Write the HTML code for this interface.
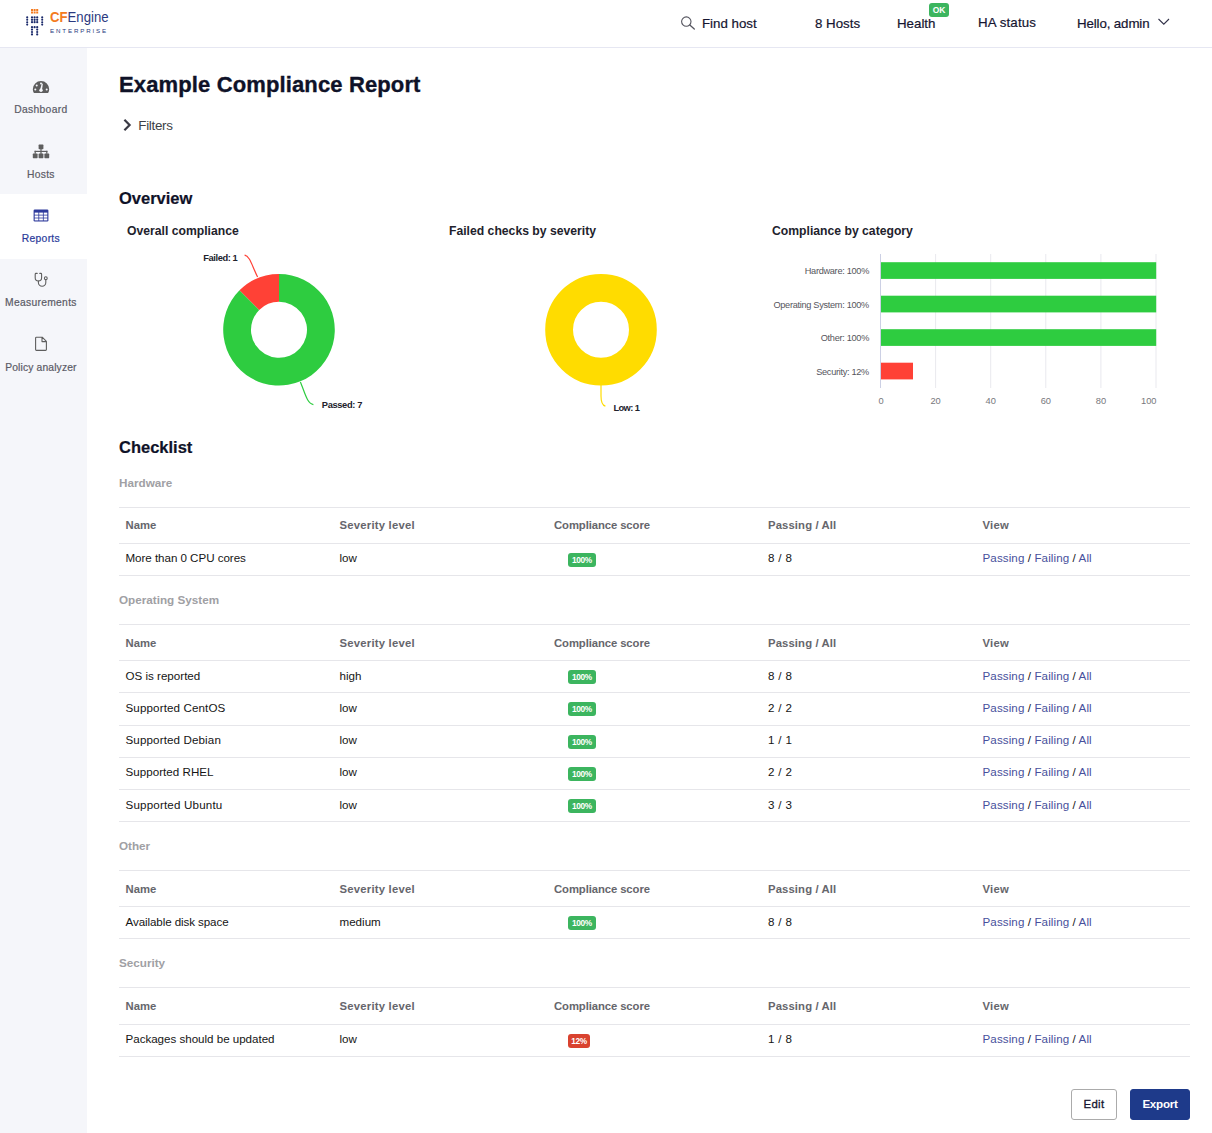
<!DOCTYPE html>
<html lang="en">
<head>
<meta charset="utf-8">
<title>Example Compliance Report</title>
<style>
*{box-sizing:border-box;margin:0;padding:0}
html,body{width:1212px;height:1133px;overflow:hidden;background:#fff}
body{font-family:"Liberation Sans",sans-serif;color:#151515;position:relative;font-size:11.6px}
.abs{position:absolute;white-space:nowrap}
#header{position:absolute;left:0;top:0;width:1212px;height:48px;background:#fff;border-bottom:1px solid #e6e7f2}
#sidebar{position:absolute;left:0;top:48px;width:87px;height:1085px;background:#f5f6fa}
.nav{position:absolute;left:0;width:80.6px;height:65px;text-align:center;color:#5b5b66}
.nav.active{background:#fff;width:87px;color:#2a3a9a}
.nav svg{position:absolute;left:40.5px;transform:translateX(-50%)}
.nav span{-webkit-text-stroke:.2px currentColor;position:absolute;left:-9.1px;width:100px;top:37.8px;font-size:10.3px;letter-spacing:.3px;line-height:14px}
.top{-webkit-text-stroke:.2px #151530;position:absolute;top:15.5px;font-size:13.3px;line-height:16px;color:#151530;white-space:nowrap}
h1{position:absolute;left:119px;top:71px;font-size:22px;line-height:28px;font-weight:bold;color:#0f1228;white-space:nowrap;letter-spacing:.13px;-webkit-text-stroke:.35px #0f1228}
h2{position:absolute;left:119px;font-size:16.5px;line-height:20px;font-weight:bold;color:#0f1228;white-space:nowrap;-webkit-text-stroke:.2px #0f1228}
h3{position:absolute;font-size:12.2px;line-height:16px;font-weight:bold;color:#22222c;white-space:nowrap}
.cat{position:absolute;left:119px;font-size:11.7px;line-height:14px;font-weight:bold;color:#a0a0a4;white-space:nowrap}
.tbl{position:absolute;left:119px;width:1071px;border-top:1px solid #e6e6ea}
.tr{position:relative;height:32.2px;border-bottom:1px solid #e6e6ea}
.tr.h{height:36.3px;font-weight:bold;color:#66666c;font-size:11.3px}
.tr>div{position:absolute;top:-1.5px;line-height:31px;white-space:nowrap}
.tr.h>div{line-height:36px;top:-.8px}
.lo .tr.h>div{top:.2px}
.hw .tr:not(.h)>div{top:-2.1px}.hw .tr:not(.h) .badge{top:11.1px}
.tr.h .c2{letter-spacing:.22px}.tr.h .c3{letter-spacing:-.09px}.tr.h .c4{letter-spacing:.12px}.tr.h .c5{letter-spacing:.27px}
.tr .c4{letter-spacing:.35px}.tr .c5{letter-spacing:.1px}
.c1{left:6.5px}.c2{left:220.5px}.c3{left:435px}.c4{left:649px}.c5{left:863.5px}
.badge{position:absolute;left:14px;top:10.5px;width:28px;height:14px;line-height:14.8px;text-align:center;border-radius:3px;background:#3cb55f;color:#fff;font-size:8.3px;font-weight:bold;letter-spacing:-.35px}
.badge.red{background:#d9422f;width:22px}
.c5 a{color:#47509c;text-decoration:none}
.btn{position:absolute;top:1089px;height:31px;border-radius:3px;font-size:12px;line-height:29.8px;text-align:center;font-weight:bold}
.btn span{display:inline-block}
</style>
</head>
<body>
<div id="header">
<svg class="abs" style="left:24px;top:7px" width="22" height="32" viewBox="24 7 22 32">
<g fill="#f47b20">
<rect x="31" y="9" width="2" height="2"/><rect x="33.6" y="9" width="2" height="2"/><rect x="36.2" y="9" width="2" height="2"/>
<rect x="31" y="11.5" width="2" height="2"/><rect x="33.6" y="11.5" width="2" height="2"/><rect x="36.2" y="11.5" width="2" height="2"/>
</g>
<g fill="#1b2a6b">
<circle cx="27.2" cy="17.4" r="1.05"/><circle cx="27.2" cy="19.8" r="1.05"/><circle cx="27.2" cy="22.2" r="1.05"/><circle cx="27.2" cy="24.6" r="1.05"/>
<circle cx="42.2" cy="17.4" r="1.05"/><circle cx="42.2" cy="19.8" r="1.05"/><circle cx="42.2" cy="22.2" r="1.05"/><circle cx="42.2" cy="24.6" r="1.05"/>
<circle cx="32" cy="17.4" r="1.1"/><circle cx="34.6" cy="17.4" r="1.1"/><circle cx="37.2" cy="17.4" r="1.1"/>
<circle cx="32" cy="19.8" r="1.1"/><circle cx="34.6" cy="19.8" r="1.1"/><circle cx="37.2" cy="19.8" r="1.1"/>
<circle cx="32" cy="22.2" r="1.1"/><circle cx="34.6" cy="22.2" r="1.1"/><circle cx="37.2" cy="22.2" r="1.1"/>
<circle cx="32" cy="27.2" r="1.1"/><circle cx="34.6" cy="27.2" r="1.1"/><circle cx="37.2" cy="27.2" r="1.1"/>
<circle cx="32" cy="29.6" r="1.1"/><circle cx="37.2" cy="29.6" r="1.1"/>
<circle cx="32" cy="32" r="1.1"/><circle cx="37.2" cy="32" r="1.1"/>
<circle cx="32" cy="34.4" r="1.1"/><circle cx="37.2" cy="34.4" r="1.1"/>
</g>
</svg>
<div class="abs" id="lg1" style="left:49.5px;top:7.8px;font-size:15.5px;line-height:18px;transform-origin:0 0;transform:scaleX(.85)"><b style="color:#f47b20">CF</b><span style="color:#2b3a80">Engine</span></div>
<div class="abs" id="lg2" style="left:50px;top:27.4px;font-size:6.2px;line-height:8px;letter-spacing:1.85px;color:#2b3a80">ENTERPRISE</div>
<svg class="abs" style="left:680px;top:15px" width="16" height="16" viewBox="0 0 16 16"><circle cx="6.3" cy="6.6" r="4.7" fill="none" stroke="#55555f" stroke-width="1.1"/><path d="M9.8 10.1 L14.3 14" stroke="#55555f" stroke-width="1.3" fill="none" stroke-linecap="round"/></svg>
<div class="top" id="t1" style="left:702px">Find host</div>
<div class="top" id="t2" style="left:815px">8 Hosts</div>
<div class="top" id="t3" style="left:897px">Health</div>
<div class="abs" id="ok" style="left:929px;top:3px;width:20px;height:14px;border-radius:3px;background:#3cb55f;color:#fff;font-size:8.5px;font-weight:bold;line-height:14px;text-align:center">OK</div>
<div class="top" id="t4" style="left:978px;top:14.5px;letter-spacing:.12px">HA status</div>
<div class="top" id="t5" style="left:1077px;letter-spacing:-.12px">Hello, admin</div>
<svg class="abs" style="left:1157px;top:17px" width="14" height="10" viewBox="0 0 14 10"><path d="M1.5 2 L6.8 7.2 L12 2" fill="none" stroke="#33334a" stroke-width="1.1"/></svg>
</div>
<div id="sidebar">
<div class="nav" style="top:16.8px"><svg style="top:15px" width="18" height="14" viewBox="0 0 18 14">
<path d="M9 1 A8.2 8.2 0 0 0 0.8 9.2 C0.8 10.7 1.2 12 1.9 13 L16.1 13 C16.8 12 17.2 10.7 17.2 9.2 A8.2 8.2 0 0 0 9 1 Z" fill="#5e5e5e"/>
<g fill="#f5f6fa"><circle cx="9" cy="3.6" r="1"/><circle cx="4.7" cy="5.4" r="1"/><circle cx="3.3" cy="9.4" r="1"/><circle cx="14.7" cy="9.4" r="1"/><circle cx="9" cy="10.3" r="1.7"/><path d="M8.1 9.9 L9.7 3.6 L10.9 3.8 L9.9 10.4 Z"/></g></svg><span>Dashboard</span></div>
<div class="nav" style="top:81.4px"><svg style="top:14.7px" width="18" height="15" viewBox="0 0 18 15">
<g fill="#5e5e5e"><rect x="6.6" y="0.6" width="4.8" height="4.6" rx=".6"/><rect x="0.8" y="9.6" width="4.8" height="4.6" rx=".6"/><rect x="6.6" y="9.6" width="4.8" height="4.6" rx=".6"/><rect x="12.4" y="9.6" width="4.8" height="4.6" rx=".6"/><rect x="8.4" y="5" width="1.2" height="5"/><rect x="2.6" y="6.8" width="12.8" height="1.2"/><rect x="2.6" y="6.8" width="1.2" height="3"/><rect x="14.2" y="6.8" width="1.2" height="3"/></g></svg><span style="top:38.5px">Hosts</span></div>
<div class="nav active" style="top:146px;height:64.6px"><svg style="top:15px" width="16" height="13" viewBox="0 0 16 13">
<rect x="0.6" y="0.6" width="14.8" height="11.8" rx="1.2" fill="#2e3a9c"/>
<g fill="#fff"><rect x="1.7" y="3.6" width="3.7" height="2.1"/><rect x="6.2" y="3.6" width="3.7" height="2.1"/><rect x="10.7" y="3.6" width="3.6" height="2.1"/><rect x="1.7" y="6.5" width="3.7" height="2.1"/><rect x="6.2" y="6.5" width="3.7" height="2.1"/><rect x="10.7" y="6.5" width="3.6" height="2.1"/><rect x="1.7" y="9.4" width="3.7" height="2"/><rect x="6.2" y="9.4" width="3.7" height="2"/><rect x="10.7" y="9.4" width="3.6" height="2"/></g></svg><span style="top:38.4px">Reports</span></div>
<div class="nav" style="top:210.6px"><svg style="top:13.3px" width="16" height="16" viewBox="0 0 16 16">
<g fill="none" stroke="#5e5e5e" stroke-width="1.1" stroke-linecap="round"><path d="M4.2 1.4 L3 1.4 Q2.2 1.4 2.2 2.3 L2.2 5.8 A3.2 3.2 0 0 0 8.6 5.8 L8.6 2.3 Q8.6 1.4 7.8 1.4 L6.8 1.4"/><path d="M5.4 9 L5.4 10.6 A3.7 3.7 0 0 0 12.8 10.6 L12.8 7.6"/><circle cx="12.8" cy="6.2" r="1.4"/></g></svg><span>Measurements</span></div>
<div class="nav" style="top:275.2px"><svg style="top:13.1px" width="14" height="16" viewBox="0 0 14 16">
<path d="M1.6 2 Q1.6 1.2 2.4 1.2 L8.2 1.2 L12.4 5.4 L12.4 13.6 Q12.4 14.4 11.6 14.4 L2.4 14.4 Q1.6 14.4 1.6 13.6 Z M8 1.4 L8 5.6 L12.2 5.6" fill="none" stroke="#5e5e5e" stroke-width="1.1" stroke-linejoin="round"/></svg><span style="letter-spacing:.15px">Policy analyzer</span></div>
</div>
<div id="main">
<h1 id="title">Example Compliance Report</h1>
<svg class="abs" style="left:122px;top:118px" width="10" height="14" viewBox="0 0 10 14"><path d="M2.4 1.8 L7.6 7 L2.4 12.2" fill="none" stroke="#3a3a44" stroke-width="2.2"/></svg>
<div class="abs" id="filters" style="left:138.3px;top:117.5px;font-size:13.4px;line-height:16px;color:#3c3f46;letter-spacing:-.3px">Filters</div>
<h2 id="ov" style="top:188px">Overview</h2>
<h3 id="ct1" style="left:127px;top:223px">Overall compliance</h3>
<h3 id="ct2" style="left:449px;top:223px">Failed checks by severity</h3>
<h3 id="ct3" style="left:772px;top:223px">Compliance by category</h3>
<svg class="abs" style="left:119px;top:244px" width="1071" height="180" viewBox="119 244 1071 180" font-family="Liberation Sans, sans-serif">
<path d="M279.00 274.00 A55.8 55.8 0 1 1 239.54 290.34 L259.20 310.00 A28 28 0 1 0 279.00 301.80 Z" fill="#2ecc40"/>
<path d="M239.54 290.34 A55.8 55.8 0 0 1 279.00 274.00 L279.00 301.80 A28 28 0 0 0 259.20 310.00 Z" fill="#ff4136"/>
<path d="M244.6 255.2 C250 256 252 266 257.6 277" fill="none" stroke="#ff4136" stroke-width="1.2"/>
<path d="M300.4 382 C305 393 307 403.5 313.4 404.6" fill="none" stroke="#2ecc40" stroke-width="1.2"/>
<text id="l1" x="237.3" y="260.8" text-anchor="end" font-size="9.3" letter-spacing="-.42" font-weight="bold" fill="#22222c">Failed: 1</text>
<text id="l2" x="321.8" y="408" font-size="9.3" letter-spacing="-.36" font-weight="bold" fill="#22222c">Passed: 7</text>
<circle cx="601" cy="329.8" r="41.9" fill="none" stroke="#ffdc00" stroke-width="27.8"/>
<path d="M601 385 L601 396 C601 402 603 405.5 605.4 406.2" fill="none" stroke="#ffdc00" stroke-width="1.2"/>
<text id="l3" x="613.4" y="411" font-size="9.3" letter-spacing="-.6" font-weight="bold" fill="#22222c">Low: 1</text>
<g stroke="#e9e9ee" stroke-width="1"><path d="M935.6 254V388M990.7 254V388M1045.8 254V388M1100.9 254V388M1156 254V388"/></g>
<path d="M880.5 254V388" stroke="#ccd0e4" stroke-width="1"/>
<rect x="881" y="262.2" width="275.2" height="16.7" fill="#2ecc40"/>
<rect x="881" y="295.7" width="275.2" height="16.7" fill="#2ecc40"/>
<rect x="881" y="329.2" width="275.2" height="16.7" fill="#2ecc40"/>
<rect x="881" y="362.7" width="32" height="16.7" fill="#ff4136"/>
<g font-size="9.2" fill="#55555c" text-anchor="end" letter-spacing="-.3">
<text class="bl" x="869" y="274.4">Hardware: 100%</text>
<text class="bl" x="869" y="307.9">Operating System: 100%</text>
<text class="bl" x="869" y="341.4">Other: 100%</text>
<text class="bl" x="869" y="374.9">Security: 12%</text>
</g>
<g font-size="9.3" fill="#77777c" text-anchor="middle">
<text x="881" y="403.7">0</text><text x="935.6" y="403.7">20</text><text x="990.7" y="403.7">40</text><text x="1045.8" y="403.7">60</text><text x="1100.9" y="403.7">80</text><text x="1148.8" y="403.7">100</text>
</g>
</svg>
<h2 id="ck" style="top:437px">Checklist</h2>
<div class="cat" style="top:476px">Hardware</div>
<div class="tbl hw" style="top:507px">
<div class="tr h"><div class="c1">Name</div><div class="c2">Severity level</div><div class="c3">Compliance score</div><div class="c4">Passing / All</div><div class="c5">View</div></div>
<div class="tr"><div class="c1" style="letter-spacing:-0.04px">More than 0 CPU cores</div><div class="c2">low</div><div class="c3"><span class="badge">100%</span></div><div class="c4">8 / 8</div><div class="c5"><a>Passing</a> / <a>Failing</a> / <a>All</a></div></div>
</div>
<div class="cat" style="top:593px">Operating System</div>
<div class="tbl lo" style="top:624px">
<div class="tr h"><div class="c1">Name</div><div class="c2">Severity level</div><div class="c3">Compliance score</div><div class="c4">Passing / All</div><div class="c5">View</div></div>
<div class="tr"><div class="c1">OS is reported</div><div class="c2">high</div><div class="c3"><span class="badge">100%</span></div><div class="c4">8 / 8</div><div class="c5"><a>Passing</a> / <a>Failing</a> / <a>All</a></div></div>
<div class="tr"><div class="c1" style="letter-spacing:0.125px">Supported CentOS</div><div class="c2">low</div><div class="c3"><span class="badge">100%</span></div><div class="c4">2 / 2</div><div class="c5"><a>Passing</a> / <a>Failing</a> / <a>All</a></div></div>
<div class="tr"><div class="c1" style="letter-spacing:0.125px">Supported Debian</div><div class="c2">low</div><div class="c3"><span class="badge">100%</span></div><div class="c4">1 / 1</div><div class="c5"><a>Passing</a> / <a>Failing</a> / <a>All</a></div></div>
<div class="tr"><div class="c1" style="letter-spacing:0.03px">Supported RHEL</div><div class="c2">low</div><div class="c3"><span class="badge">100%</span></div><div class="c4">2 / 2</div><div class="c5"><a>Passing</a> / <a>Failing</a> / <a>All</a></div></div>
<div class="tr"><div class="c1" style="letter-spacing:0.18px">Supported Ubuntu</div><div class="c2">low</div><div class="c3"><span class="badge">100%</span></div><div class="c4">3 / 3</div><div class="c5"><a>Passing</a> / <a>Failing</a> / <a>All</a></div></div>
</div>
<div class="cat" style="top:839px">Other</div>
<div class="tbl lo" style="top:870px">
<div class="tr h"><div class="c1">Name</div><div class="c2">Severity level</div><div class="c3">Compliance score</div><div class="c4">Passing / All</div><div class="c5">View</div></div>
<div class="tr"><div class="c1" style="letter-spacing:-0.09px">Available disk space</div><div class="c2">medium</div><div class="c3"><span class="badge">100%</span></div><div class="c4">8 / 8</div><div class="c5"><a>Passing</a> / <a>Failing</a> / <a>All</a></div></div>
</div>
<div class="cat" style="top:956px">Security</div>
<div class="tbl" style="top:987.4px">
<div class="tr h"><div class="c1">Name</div><div class="c2">Severity level</div><div class="c3">Compliance score</div><div class="c4">Passing / All</div><div class="c5">View</div></div>
<div class="tr"><div class="c1" style="letter-spacing:-0.02px">Packages should be updated</div><div class="c2">low</div><div class="c3"><span class="badge red">12%</span></div><div class="c4">1 / 8</div><div class="c5"><a>Passing</a> / <a>Failing</a> / <a>All</a></div></div>
</div>
<div class="btn" id="edit" style="left:1071px;width:46px;border:1px solid #ababab;color:#151530;background:#fff;font-weight:normal;font-size:11.4px;letter-spacing:.3px;line-height:28.2px;-webkit-text-stroke:.3px #151530"><span>Edit</span></div>
<div class="btn" id="export" style="left:1130px;width:60px;border:1px solid #1e3a8a;color:#fff;background:#1e3a8a;font-size:11.6px;letter-spacing:-.25px;line-height:28px"><span>Export</span></div>
</div>
</body>
</html>
